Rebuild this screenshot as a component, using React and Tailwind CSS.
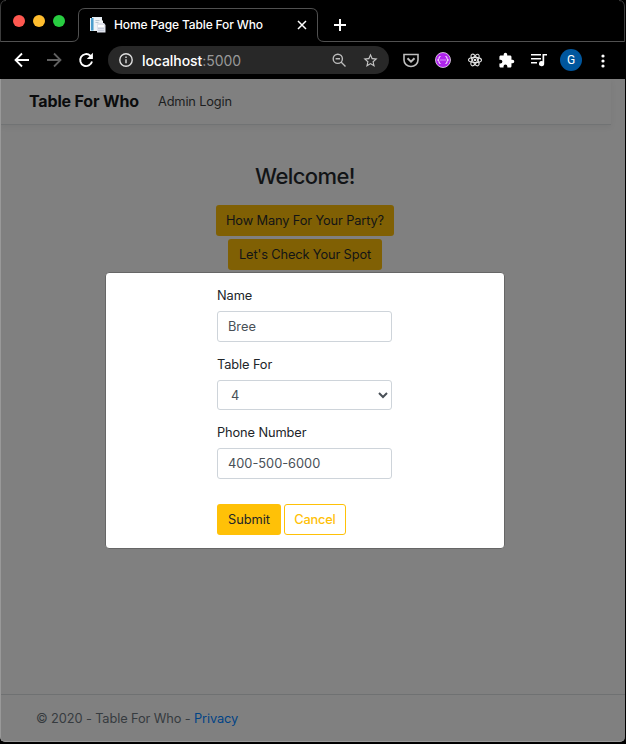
import React from "react";

function TabStrip() {
  return (
    <div className="relative flex h-[42px] shrink-0">
      <svg className="absolute inset-0" width="626" height="42" fill="none" stroke="#515151">
        <path d="M0 41.5H72Q78.5 41.5 78.5 35V15Q78.5 8.5 85 8.5H311Q317.5 8.5 317.5 15V35Q317.5 41.5 324 41.5H625" />
        <path d="M.5 42V7Q.5 .5 6 .5M619 .5Q624.5 .5 624.5 7V42" stroke="#3c3c3c" />
      </svg>
      <div className="relative flex w-[78px] gap-2 pl-[13px] pt-[15px]">
        <span className="size-3 rounded-full bg-[#ff5850]" />
        <span className="size-3 rounded-full bg-[#ffbd2e]" />
        <span className="size-3 rounded-full bg-[#28cd41]" />
      </div>
      <div className="relative flex w-[240px] items-center pt-2 pl-[11px]">
        <svg width="18" height="18" viewBox="0 0 18 18" className="shrink-0">
          <path d="M1 2h2V1h10v14H1z" fill="#e4edf3" />
          <path d="M2 2h2.500v12.500H2z" fill="#4b9ccc" />
          <path d="M5 2h6l3 3v10H5z" fill="#f0f3f6" />
          <path d="M6.500 4.500h4M6.500 6.500h3" stroke="#bac8d4" />
          <path d="M8 7h7l1.500 2V16.500H8z" fill="#dfe2eb" />
          <path d="M9 9h6v2H9z" fill="#fff" />
          <path d="M9 12.500h6M9 14.500h6" stroke="#c6cddb" />
        </svg>
        <span className="ml-[7px] w-[180px] whitespace-nowrap text-[12px] font-medium tracking-[-0.130px]">Home Page Table For Who</span>
        <svg width="10" height="10" stroke="#fff" strokeWidth="1.500" className="ml-[3px]"><path d="M1 1l8 8M9 1l-8 8" /></svg>
      </div>
      <svg width="12" height="12" stroke="#fff" strokeWidth="2" className="relative ml-4 mt-[19px]"><path d="M6 0v12M0 6h12" /></svg>
    </div>
  );
}

function Toolbar() {
  return (
    <div className="flex h-[37px] shrink-0 items-center pb-px">
      <svg width="16" height="16" viewBox="0 0 16 16" fill="none" stroke="#fff" strokeWidth="1.800" className="ml-3.5"><path d="M15 8H2M8 1.500L1.500 8L8 14.500" /></svg>
      <svg width="16" height="16" viewBox="0 0 16 16" fill="none" stroke="#606060" strokeWidth="1.800" className="ml-4"><path d="M1 8h13M8 1.500L14.500 8L8 14.500" /></svg>
      <svg width="16" height="16" viewBox="0 0 16 16" fill="none" stroke="#fff" strokeWidth="1.900" className="ml-4"><path d="M14 9.500A6 6 0 1 1 12.300 3.700L14 5.400" /><path d="M14.900.8v6.100H8.800z" fill="#fff" stroke="none" /></svg>
      <div className="ml-3.5 flex h-7 w-[281px] shrink-0 items-center rounded-full bg-[#282828] pl-[11px]">
        <svg width="14" height="14" viewBox="0 0 14 14" fill="none" stroke="#dedede" strokeWidth="1.400"><circle cx="7" cy="7" r="6.200" /><path d="M7 6.200v4M7 3.500v1.400" /></svg>
        <span className="ml-[9px] w-[190px] text-[14px] font-medium tracking-[-0.070px] text-white">localhost<span className="font-normal text-[#999]">:5000</span></span>
        <svg width="15" height="15" viewBox="0 0 15 15" fill="none" stroke="#bcbcbc" strokeWidth="1.400"><circle cx="5.800" cy="5.800" r="4.600" /><path d="M9 9l4.500 4.500M3.600 5.800H8" /></svg>
        <svg width="17" height="17" viewBox="0 0 24 24" fill="#c4c4c4" className="ml-[15px]"><path d="M22 9.240l-7.190-.620L12 2 9.190 8.630 2 9.240l5.460 4.730L5.820 21 12 17.270 18.180 21l-1.630-7.030L22 9.240zM12 15.400l-3.760 2.270 1-4.280-3.320-2.880 4.380-.380L12 6.100l1.710 4.040 4.380.380-3.320 2.880 1 4.280L12 15.400z" /></svg>
      </div>
      <svg width="16" height="15" viewBox="0 0 16 15" fill="none" stroke="#bdbdbd" strokeWidth="1.600" className="ml-3.5 mt-px"><path d="M1 1.500h14V7a7 6.500 0 0 1-14 0z" /><path d="M4.500 5.300L8 8.700l3.500-3.400" strokeWidth="2" /></svg>
      <svg width="16" height="16" viewBox="0 0 16 16" className="ml-4"><circle cx="8" cy="8" r="7.500" fill="#af24ec" stroke="#ece0f0" strokeWidth=".8" /><path d="M5.500 4.500Q3.800 4.300 4 6.300Q4 8 2.500 8Q4 8 4 9.700Q3.800 11.700 5.500 11.500M10.500 4.500Q12.200 4.300 12 6.300Q12 8 13.500 8Q12 8 12 9.700Q12.200 11.700 10.500 11.500" stroke="#fff" fill="none" /><path d="M5.500 8h5" stroke="#fff" strokeDasharray="1 1" /></svg>
      <svg width="14" height="14" viewBox="0 0 14 14" fill="none" stroke="#e0e0e0" strokeWidth="1.100" className="ml-[17px]"><ellipse cx="7" cy="7" rx="6.500" ry="2.600" /><ellipse cx="7" cy="7" rx="6.500" ry="2.600" transform="rotate(60 7 7)" /><ellipse cx="7" cy="7" rx="6.500" ry="2.600" transform="rotate(120 7 7)" /><circle cx="7" cy="7" r="1.300" fill="#e0e0e0" stroke="none" /></svg>
      <svg width="17" height="17" viewBox="0 0 24 24" fill="#fff" className="ml-4"><path d="M20.500 11H19V7c0-1.100-.900-2-2-2h-4V3.500a2.500 2.500 0 0 0-5 0V5H4c-1.100 0-2 .900-2 2v3.800h1.500a2.700 2.700 0 0 1 0 5.400H2V20c0 1.100.900 2 2 2h3.800v-1.500a2.700 2.700 0 0 1 5.400 0V22H17c1.100 0 2-.900 2-2v-4h1.500a2.500 2.500 0 0 0 0-5z" /></svg>
      <svg width="16" height="14" viewBox="0 0 16 14" fill="#fff" className="ml-4"><path d="M0 1h10v1.500H0zM0 5h10v1.500H0zM0 9h6v1.500H0zM11.500 1H16v1.600h-2.800v8A2.600 2.600 0 1 1 11.500 8.200z" /></svg>
      <span className="ml-[13px] flex size-[22px] shrink-0 items-center justify-center rounded-full bg-[#00569d] font-['Roboto','Liberation_Sans',sans-serif] text-[12px]">G</span>
      <svg width="4" height="14" viewBox="0 0 4 14" fill="#fff" className="ml-[19px] mt-px"><circle cx="2" cy="2" r="1.600" /><circle cx="2" cy="7" r="1.600" /><circle cx="2" cy="12" r="1.600" /></svg>
    </div>
  );
}

function Field({ label, value, select }) {
  return (
    <div className="mb-[13px]">
      <div className="mb-[5px] h-5 text-[12.800px] leading-5 tracking-[-0.100px] text-[#212529]">{label}</div>
      <div className={`flex w-[175px] items-center justify-between rounded-[3px] border border-[#ced4da] text-[12.800px] text-[#495057] ${select ? "h-[30px] pl-[13px] pr-[3px] pt-px" : "h-[31px] pl-[10px]"}`}>
        <span>{value}</span>
        {select && <svg width="10" height="7" viewBox="0 0 10 7" fill="none" stroke="#495057" strokeWidth="2"><path d="M1 1l4 4 4-4" /></svg>}
      </div>
    </div>
  );
}

export default function App() {
  return (
    <div className="relative flex h-[744px] w-[626px] flex-col overflow-hidden bg-black font-['Inter','Liberation_Sans',sans-serif] text-white">
      <TabStrip />
      <Toolbar />
      <div className="flex h-[663px] w-[625px] flex-col overflow-hidden rounded-b-[5px] border-b border-l border-[#999] bg-[#808080] text-[#121416]">
        <header className="flex h-[46px] w-[610px] shrink-0 items-center border-b border-[#717374] pl-7 shadow-[0_2px_6px_rgba(0,0,0,0.060)]">
          <span className="w-[129px] whitespace-nowrap pb-px text-[16px] font-bold tracking-[-0.160px] text-[#0b0c0d]">Table For Who</span>
          <span className="text-[12.800px] tracking-[-0.150px] text-[#1c1e20]">Admin Login</span>
        </header>
        <main className="flex w-[608px] flex-1 flex-col items-center pt-[38px]">
          <h1 className="mb-[15px] text-[22px] font-medium leading-[27px] tracking-[-0.600px]">Welcome!</h1>
          <div className="mb-[3px] flex h-[31px] w-[178px] items-center justify-center rounded-[3px] bg-[#806004] text-[12.800px] tracking-[-0.120px]">How Many For Your Party?</div>
          <div className="flex h-[31px] w-[154px] items-center justify-center rounded-[3px] bg-[#806004] text-[12.800px] tracking-[-0.120px]">Let's Check Your Spot</div>
        </main>
        <footer className="flex h-[47px] items-center border-t border-[#6f7172] pl-[35px] pt-px text-[12.800px] tracking-[-0.110px] text-[#363b3f]">
          <span>© 2020 - Table For Who - <span className="text-[#004386]">Privacy</span></span>
        </footer>
      </div>
      <div className="absolute left-[105px] top-[272px] h-[277px] w-[400px] rounded-[4px] border border-[#666] bg-white pl-[111px] pt-[13px]">
        <Field label="Name" value="Bree" />
        <Field label="Table For" value="4" select />
        <Field label="Phone Number" value="400-500-6000" />
        <div className="mt-[25px] flex gap-[3px] text-[12.800px]">
          <div className="flex h-[31px] w-[64px] items-center justify-center rounded-[3px] bg-[#ffc107] text-[#212529]">Submit</div>
          <div className="flex h-[31px] w-[62px] items-center justify-center rounded-[3px] border border-[#ffc107] font-medium tracking-[-0.200px] text-[#ffc107]">Cancel</div>
        </div>
      </div>
    </div>
  );
}
